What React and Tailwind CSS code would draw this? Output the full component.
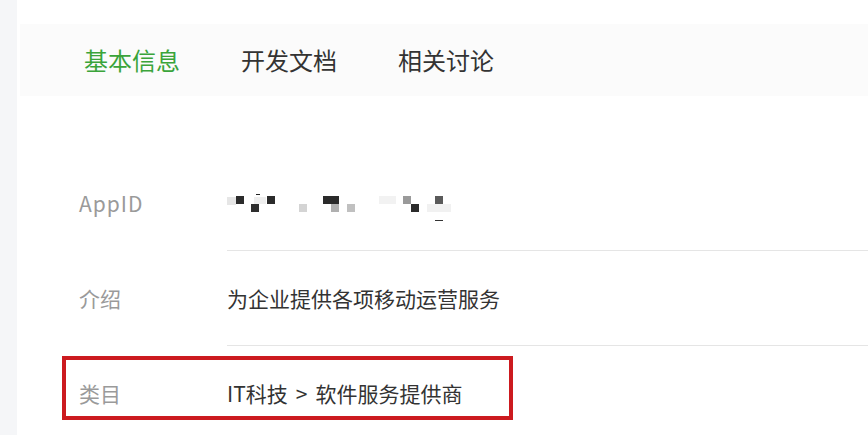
import React from "react";

const font = { fontFamily: '"Noto Sans CJK SC", "Noto Sans", sans-serif' };

function Pixelated() {
  const cells = [
    [228, 197, 9, 8, "#e6e6e6"],
    [237, 196, 8, 8, "#2b2b2b"],
    [252, 204, 8, 8, "#2e2e2e"],
    [255, 197, 12, 7, "#eeeeee"],
    [257, 194, 4, 1, "#222"],
    [268, 196, 8, 8, "#2b2b2b"],
    [300, 204, 8, 8, "#d4d4d4"],
    [324, 196, 16, 8, "#2a2a2a"],
    [332, 204, 8, 8, "#b0b0b0"],
    [348, 204, 8, 8, "#c0c0c0"],
    [380, 196, 17, 8, "#f2f2f2"],
    [404, 196, 8, 8, "#9a9a9a"],
    [412, 204, 8, 8, "#2b2b2b"],
    [428, 204, 24, 8, "#f1f1f1"],
    [436, 196, 8, 8, "#5a5a5a"],
    [436, 220, 8, 1, "#333"],
  ];
  return (
    <svg width="240" height="40" viewBox="220 188 240 40" className="block">
      {cells.map(([x, y, w, h, c], i) => (
        <rect key={i} x={x} y={y} width={w} height={h} fill={c} />
      ))}
    </svg>
  );
}

function Row({ label, children, highlight }) {
  return (
    <div className="relative flex h-[95px]">
      <div className="w-[210px] pl-[62px] pt-[33px] text-[21px] leading-[28px] text-[#9a9a9a]">
        {label}
      </div>
      <div className="flex-1 border-b border-[#e5e5e5] pt-[33px] text-[21px] leading-[28px] text-[#333]">
        {children}
      </div>
      {highlight && (
        <div className="pointer-events-none absolute left-[45px] top-[10px] h-[64px] w-[451px] border-[4px] border-[#cc1a1f]" />
      )}
    </div>
  );
}

export default function App() {
  return (
    <div className="flex h-[435px] w-[868px] overflow-hidden bg-white" style={font}>
      <div className="w-[17px] shrink-0 bg-[#f5f6f8]" />
      <div className="flex-1 bg-white pt-[24px]">
        <div className="ml-[3px] flex h-[72px] items-center gap-[61px] bg-[#fbfbfb] pl-[64px] text-[24px]">
          <span className="text-[#3aa43a]">基本信息</span>
          <span className="text-[#333]">开发文档</span>
          <span className="text-[#333]">相关讨论</span>
        </div>
        <div className="mt-[60px]">
          <div className="relative flex h-[95px]">
            <div className="w-[210px] pl-[62px] pt-[33px] text-[21px] leading-[28px] tracking-[1px] text-[#9a9a9a]">
              AppID
            </div>
            <div className="relative flex-1 border-b border-[#e5e5e5]">
              <div className="absolute left-[-8px] top-[32px]">
                <Pixelated />
              </div>
            </div>
          </div>
          <Row label="介绍">为企业提供各项移动运营服务</Row>
          <Row label="类目" highlight>
            IT科技<span className="mx-[8px]">&gt;</span>软件服务提供商
          </Row>
        </div>
      </div>
    </div>
  );
}
